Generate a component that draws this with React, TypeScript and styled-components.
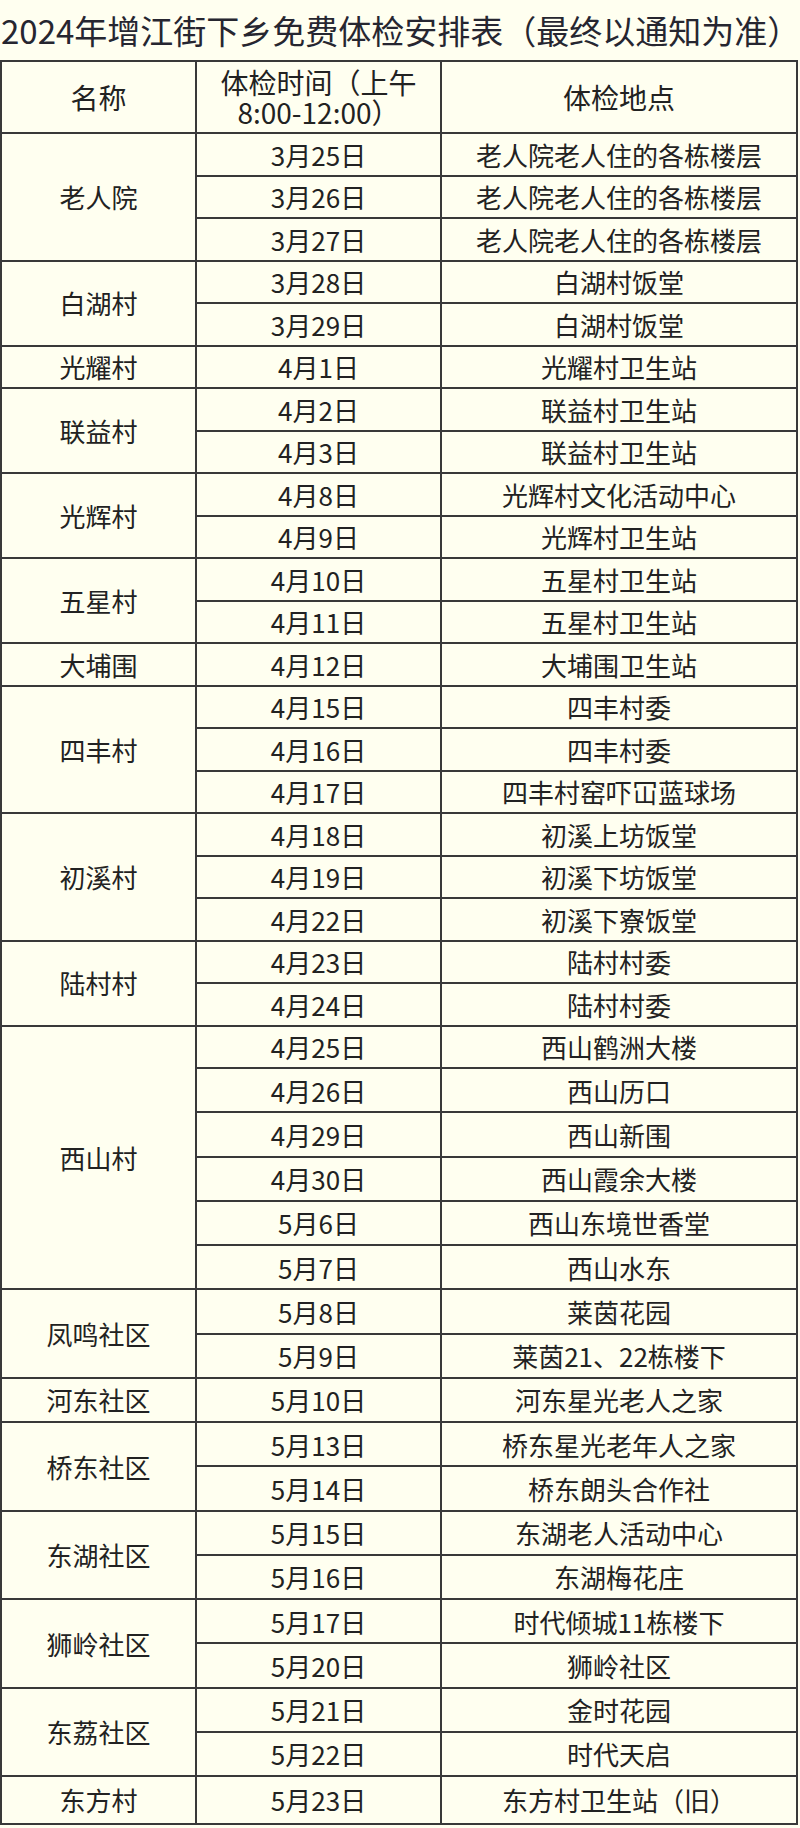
import React from "react";
import styled, { createGlobalStyle } from "styled-components";

type Visit = { date: string; place: string };
type Group = { name: string; visits: Visit[] };

const groups: Group[] = [
  {
    name: "老人院",
    visits: [
      { date: "3月25日", place: "老人院老人住的各栋楼层" },
      { date: "3月26日", place: "老人院老人住的各栋楼层" },
      { date: "3月27日", place: "老人院老人住的各栋楼层" },
    ],
  },
  {
    name: "白湖村",
    visits: [
      { date: "3月28日", place: "白湖村饭堂" },
      { date: "3月29日", place: "白湖村饭堂" },
    ],
  },
  { name: "光耀村", visits: [{ date: "4月1日", place: "光耀村卫生站" }] },
  {
    name: "联益村",
    visits: [
      { date: "4月2日", place: "联益村卫生站" },
      { date: "4月3日", place: "联益村卫生站" },
    ],
  },
  {
    name: "光辉村",
    visits: [
      { date: "4月8日", place: "光辉村文化活动中心" },
      { date: "4月9日", place: "光辉村卫生站" },
    ],
  },
  {
    name: "五星村",
    visits: [
      { date: "4月10日", place: "五星村卫生站" },
      { date: "4月11日", place: "五星村卫生站" },
    ],
  },
  { name: "大埔围", visits: [{ date: "4月12日", place: "大埔围卫生站" }] },
  {
    name: "四丰村",
    visits: [
      { date: "4月15日", place: "四丰村委" },
      { date: "4月16日", place: "四丰村委" },
      { date: "4月17日", place: "四丰村窑吓冚蓝球场" },
    ],
  },
  {
    name: "初溪村",
    visits: [
      { date: "4月18日", place: "初溪上坊饭堂" },
      { date: "4月19日", place: "初溪下坊饭堂" },
      { date: "4月22日", place: "初溪下寮饭堂" },
    ],
  },
  {
    name: "陆村村",
    visits: [
      { date: "4月23日", place: "陆村村委" },
      { date: "4月24日", place: "陆村村委" },
    ],
  },
  {
    name: "西山村",
    visits: [
      { date: "4月25日", place: "西山鹤洲大楼" },
      { date: "4月26日", place: "西山历口" },
      { date: "4月29日", place: "西山新围" },
      { date: "4月30日", place: "西山霞余大楼" },
      { date: "5月6日", place: "西山东境世香堂" },
      { date: "5月7日", place: "西山水东" },
    ],
  },
  {
    name: "凤鸣社区",
    visits: [
      { date: "5月8日", place: "莱茵花园" },
      { date: "5月9日", place: "莱茵21、22栋楼下" },
    ],
  },
  { name: "河东社区", visits: [{ date: "5月10日", place: "河东星光老人之家" }] },
  {
    name: "桥东社区",
    visits: [
      { date: "5月13日", place: "桥东星光老年人之家" },
      { date: "5月14日", place: "桥东朗头合作社" },
    ],
  },
  {
    name: "东湖社区",
    visits: [
      { date: "5月15日", place: "东湖老人活动中心" },
      { date: "5月16日", place: "东湖梅花庄" },
    ],
  },
  {
    name: "狮岭社区",
    visits: [
      { date: "5月17日", place: "时代倾城11栋楼下" },
      { date: "5月20日", place: "狮岭社区" },
    ],
  },
  {
    name: "东荔社区",
    visits: [
      { date: "5月21日", place: "金时花园" },
      { date: "5月22日", place: "时代天启" },
    ],
  },
  { name: "东方村", visits: [{ date: "5月23日", place: "东方村卫生站（旧）" }] },
];

const GlobalStyle = createGlobalStyle`
  html, body {
    margin: 0;
    padding: 0;
    background: #fffff0;
  }
  body {
    font-family: "Noto Sans CJK SC", "Noto Sans", sans-serif;
    color: #222;
  }
`;

const Page = styled.div`
  width: 800px;
  min-height: 1828px;
  background: #fffff0;
`;

const Title = styled.h1`
  margin: 0;
  height: 60px;
  line-height: 60px;
  padding-left: 1px;
  font-size: 33px;
  font-weight: 400;
  color: #262630;
  white-space: nowrap;
`;

// the grid's dark background shows through the gaps as the ruling lines
const Sheet = styled.div`
  display: grid;
  width: 798px;
  box-sizing: border-box;
  padding: 2px;
  gap: 2px;
  background: #393939;
  grid-template-columns: 193px 243px 354px;
  grid-template-rows: 70px repeat(22, 40.5px) repeat(16, 42.25px) 46px;
`;

const Cell = styled.div<{ $col: number; $span?: number; $head?: boolean }>`
  grid-column: ${(p) => p.$col};
  grid-row: ${(p) => (p.$span ? `span ${p.$span}` : "auto")};
  background: #fffff0;
  display: flex;
  align-items: center;
  justify-content: center;
  text-align: center;
  font-size: ${(p) => (p.$head ? 28 : 26)}px;
  line-height: ${(p) => (p.$head ? "30px" : "1.2")};
  color: #222;
  white-space: nowrap;
`;

export default function App() {
  return (
    <Page>
      <GlobalStyle />
      <Title>2024年增江街下乡免费体检安排表（最终以通知为准）</Title>
      <Sheet>
        <Cell $col={1} $head>
          名称
        </Cell>
        <Cell $col={2} $head>
          体检时间（上午
          <br />
          8:00-12:00）
        </Cell>
        <Cell $col={3} $head>
          体检地点
        </Cell>
        {groups.map((g) => (
          <React.Fragment key={g.name}>
            <Cell $col={1} $span={g.visits.length}>
              {g.name}
            </Cell>
            {g.visits.map((v) => (
              <React.Fragment key={v.date}>
                <Cell $col={2}>{v.date}</Cell>
                <Cell $col={3}>{v.place}</Cell>
              </React.Fragment>
            ))}
          </React.Fragment>
        ))}
      </Sheet>
    </Page>
  );
}
